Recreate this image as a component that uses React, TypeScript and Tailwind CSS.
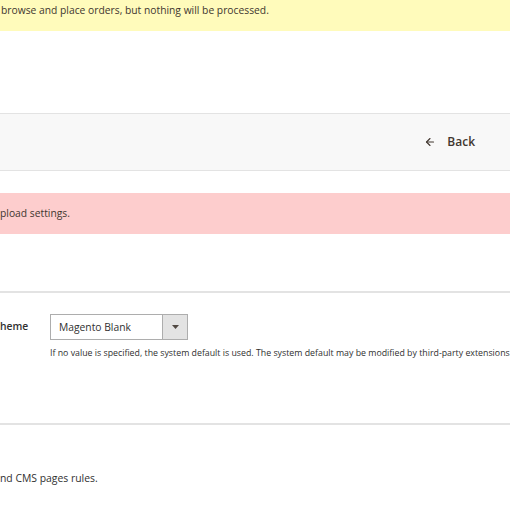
import { ArrowLeft } from 'lucide-react'

export default function App() {
  return (
    <div className="w-[510px] h-[510px] overflow-hidden bg-white text-[#41362f]" style={{ fontFamily: '"Open Sans", "Liberation Sans", sans-serif' }}>
      {/* demo mode notice */}
      <div className="h-[31px] bg-[#fffbbb] pl-[1px] pt-[3px] text-[10.3px] leading-[14px] whitespace-nowrap">
        browse and place orders, but nothing will be processed.
      </div>

      <div className="h-[82px]" />

      {/* page actions */}
      <div className="h-[58px] bg-[#f8f8f8] border-y border-[#e3e3e3] flex items-center justify-end pr-[35px]">
        <button className="flex items-center gap-[11px] text-[12px] font-semibold text-[#41362f]">
          <ArrowLeft size={12} strokeWidth={2.2} />
          <span>Back</span>
        </button>
      </div>

      <div className="h-[22px]" />

      {/* error message */}
      <div className="h-[41px] bg-[#fdcdcd] flex items-center text-[10.3px] whitespace-nowrap text-[#41362f]">
        pload settings.
      </div>

      <div className="h-[59px] border-b-2 border-[#e3e3e3]" />

      {/* theme field */}
      <div className="h-[132px] border-b-2 border-[#e3e3e3] pt-[21px]">
        <div className="flex items-center gap-[22px]">
          <span className="w-[28px] text-[10.3px] font-semibold text-right text-[#303030]">heme</span>
          <div className="flex w-[138px] h-[26px] border border-[#adadad] bg-white">
            <span className="flex-1 pl-[8px] text-[10.3px] leading-[24px] text-[#303030]">Magento Blank</span>
            <span className="w-[25px] bg-[#e3e3e3] border-l border-[#adadad] flex items-center justify-center">
              <svg width="7" height="4" viewBox="0 0 7 4">
                <path d="M0 0h7L3.5 4z" fill="#514943" />
              </svg>
            </span>
          </div>
        </div>
        <p className="ml-[50px] mt-[7px] text-[8.8px] leading-[12px] whitespace-nowrap text-[#303030]">
          If no value is specified, the system default is used. The system default may be modified by third-party extensions.
        </p>
      </div>

      <div className="pt-[46px] text-[10.4px] whitespace-nowrap text-[#303030]">
        nd CMS pages rules.
      </div>
    </div>
  )
}
